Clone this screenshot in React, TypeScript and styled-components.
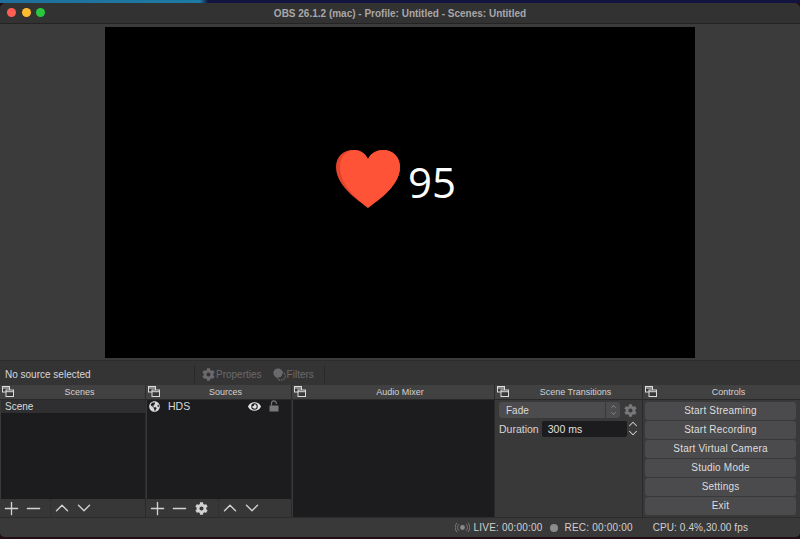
import React from "react";
import styled, { createGlobalStyle } from "styled-components";
import { Plus, Minus, ChevronUp, ChevronDown } from "lucide-react";
import { FaCog, FaEye, FaGlobeAmericas } from "react-icons/fa";

const GlobalStyle = createGlobalStyle`
  html, body {
    margin: 0;
    padding: 0;
    background: #1a0d1c;
  }
  body {
    font-family: "Liberation Sans", Arial, sans-serif;
    font-size: 10px;
    color: #d6d6d6;
  }
`;

const UndockIcon = () => (
  <DockIconSvg viewBox="0 0 12 11" fill="none" stroke="#dcdcdc" strokeWidth="1">
    <rect x="0.5" y="0.5" width="7" height="5.5" fill="#3a393a" />
    <path d="M0.5 2h7" />
    <rect x="4" y="4" width="7.5" height="6.5" fill="#3a393a" />
    <path d="M4 5.7h7.5" />
  </DockIconSvg>
);

const FilterIcon = () => (
  <svg width="13" height="13" viewBox="0 0 13 13" fill="#6a696b">
    <circle cx="5" cy="5" r="4.6" />
    <circle cx="8" cy="8" r="4.2" fill="none" stroke="#6a696b" strokeWidth="1.2" strokeDasharray="1.5 1" />
  </svg>
);

const LockIcon = () => (
  <svg width="10" height="12" viewBox="0 0 10 12" fill="none">
    <path d="M2.5 5.5V3.2a2.4 2.4 0 0 1 4.8 0V4" stroke="#77767a" strokeWidth="1.2" />
    <rect x="0.5" y="5.5" width="9" height="6" fill="#77767a" />
  </svg>
);

const LiveIcon = () => (
  <svg width="15" height="11" viewBox="0 0 15 11" fill="none" stroke="#767576" strokeWidth="1">
    <circle cx="7.5" cy="5.5" r="2.4" fill="#8a898a" stroke="none" />
    <path d="M4 2.2a4.8 4.8 0 0 0 0 6.6M11 2.2a4.8 4.8 0 0 1 0 6.6" />
    <path d="M2 .8a7.2 7.2 0 0 0 0 9.4M13 .8a7.2 7.2 0 0 1 0 9.4" />
  </svg>
);

const HeartGraphic = () => (
  <svg width="64" height="58" viewBox="0 0 64 58">
    <path
      d="M32 58C28 54 0 38 0 17C0 7 7 0 17 0C23 0 29 3 32 9C35 3 41 0 47 0C57 0 64 7 64 17C64 38 36 54 32 58Z"
      fill="#e4432c"
    />
    <path
      d="M32 58C28 54 4 38 4 17C4 7 10 0 19 0C24 0 29 3 32 9C35 3 41 0 47 0C57 0 64 7 64 17C64 38 36 54 32 58Z"
      fill="#ff5338"
    />
  </svg>
);

const SceneToolbar = () => (
  <Toolbar>
    <ToolGroup>
      <ToolButton><Plus size={21} strokeWidth={1.5} /></ToolButton>
      <ToolButton><Minus size={21} strokeWidth={1.5} /></ToolButton>
    </ToolGroup>
    <ToolGroup>
      <ToolButton><ChevronUp size={24} strokeWidth={1.5} /></ToolButton>
      <ToolButton><ChevronDown size={24} strokeWidth={1.5} /></ToolButton>
    </ToolGroup>
  </Toolbar>
);

const SourceToolbar = () => (
  <Toolbar>
    <ToolGroup>
      <ToolButton><Plus size={21} strokeWidth={1.5} /></ToolButton>
      <ToolButton><Minus size={21} strokeWidth={1.5} /></ToolButton>
      <ToolButton><FaCog size={13} /></ToolButton>
    </ToolGroup>
    <ToolGroup>
      <ToolButton><ChevronUp size={24} strokeWidth={1.5} /></ToolButton>
      <ToolButton><ChevronDown size={24} strokeWidth={1.5} /></ToolButton>
    </ToolGroup>
  </Toolbar>
);

const controlLabels = [
  "Start Streaming",
  "Start Recording",
  "Start Virtual Camera",
  "Studio Mode",
  "Settings",
  "Exit",
];

export default function App() {
  return (
    <Desktop>
      <GlobalStyle />
      <Wallpaper />
      <Window>
        <TitleBar>
          <TrafficLights>
            <Light color="#ff5f52" />
            <Light color="#fdbc2e" />
            <Light color="#28c840" />
          </TrafficLights>
          <Title>OBS 26.1.2 (mac) - Profile: Untitled - Scenes: Untitled</Title>
        </TitleBar>
        <PreviewArea>
          <Preview>
            <HeartGraphic />
            <HeartCount>95</HeartCount>
          </Preview>
        </PreviewArea>
        <ContextBar>
          <ContextLabel>No source selected</ContextLabel>
          <ContextActions>
            <ContextAction>
              <FaCog size={13} color="#6a696b" />
              Properties
            </ContextAction>
            <ContextAction>
              <FilterIcon />
              Filters
            </ContextAction>
          </ContextActions>
        </ContextBar>
        <Docks>
          <Dock>
            <DockTitle><UndockIcon />Scenes</DockTitle>
            <DockList>
              <SceneRow>Scene</SceneRow>
            </DockList>
            <SceneToolbar />
          </Dock>
          <Dock>
            <DockTitle><UndockIcon />Sources</DockTitle>
            <DockList>
              <SourceRow>
                <FaGlobeAmericas size={11} color="#d8d8d8" />
                <SourceName>HDS</SourceName>
                <FaEye size={13} color="#e4e4e4" />
                <LockIcon />
              </SourceRow>
            </DockList>
            <SourceToolbar />
          </Dock>
          <Dock>
            <DockTitle><UndockIcon />Audio Mixer</DockTitle>
            <DockList />
          </Dock>
          <Dock>
            <DockTitle><UndockIcon />Scene Transitions</DockTitle>
            <TransitionBody>
              <ComboRow>
                <Combo>
                  Fade
                  <ComboStepper>
                    <ChevronUp size={7} strokeWidth={2} />
                    <ChevronDown size={7} strokeWidth={2} />
                  </ComboStepper>
                </Combo>
                <FaCog size={13} color="#77767a" />
              </ComboRow>
              <DurationRow>
                <span>Duration</span>
                <DurationInput>300 ms</DurationInput>
                <Spinner>
                  <ChevronUp size={14} strokeWidth={1.8} />
                  <ChevronDown size={14} strokeWidth={1.8} />
                </Spinner>
              </DurationRow>
            </TransitionBody>
          </Dock>
          <Dock>
            <DockTitle><UndockIcon />Controls</DockTitle>
            <ControlsBody>
              {controlLabels.map((label) => (
                <ControlButton key={label}>{label}</ControlButton>
              ))}
            </ControlsBody>
          </Dock>
        </Docks>
        <StatusBar>
          <StatusItem>
            <LiveIcon />
            LIVE: 00:00:00
          </StatusItem>
          <StatusItem>
            <RecDot />
            REC: 00:00:00
          </StatusItem>
          <CpuItem>CPU: 0.4%,30.00 fps</CpuItem>
        </StatusBar>
      </Window>
    </Desktop>
  );
}

const Desktop = styled.div`
  display: flex;
  flex-direction: column;
  width: 800px;
  height: 539px;
  overflow: hidden;
  background: #240d14;
`;

const Wallpaper = styled.div`
  flex: none;
  height: 3px;
  background: linear-gradient(90deg, #1f6f9c 0, #1c7aa3 200px, #12143f 208px, #12143f 100%);
`;

const Window = styled.div`
  display: flex;
  flex-direction: column;
  height: 534px;
  background: #3a393a;
  border-radius: 6px 6px 5px 5px;
  overflow: hidden;
`;

const TitleBar = styled.div`
  position: relative;
  flex: none;
  display: flex;
  align-items: center;
  justify-content: center;
  height: 20px;
  background: #333233;
  border-bottom: 1px solid #242324;
`;

const TrafficLights = styled.div`
  position: absolute;
  left: 7px;
  top: 5px;
  display: flex;
  gap: 5.5px;
`;

const Light = styled.span<{ color: string }>`
  width: 9px;
  height: 9px;
  border-radius: 50%;
  background: ${(props) => props.color};
`;

const Title = styled.div`
  font-size: 10px;
  font-weight: 700;
  color: #a8a7a8;
`;

const PreviewArea = styled.div`
  flex: none;
  display: flex;
  justify-content: center;
  height: 337px;
  padding-top: 3px;
  box-sizing: border-box;
  border-bottom: 1px solid #2e2d2e;
  background: #3c3b3c;
`;

const Preview = styled.div`
  display: flex;
  align-items: center;
  justify-content: center;
  gap: 8px;
  width: 590px;
  height: 331px;
  padding-bottom: 27px;
  padding-right: 8px;
  box-sizing: border-box;
  background: #000;
`;

const HeartCount = styled.div`
  font-family: "Open Sans", sans-serif;
  font-size: 42px;
  color: #fff;
  line-height: 1;
  margin-top: 6px;
`;

const ContextBar = styled.div`
  flex: none;
  display: flex;
  align-items: center;
  height: 24px;
  padding: 2px 0 0 5px;
  box-sizing: border-box;
  background: #353435;
`;

const ContextLabel = styled.div`
  width: 189px;
  color: #d8d8d8;
`;

const ContextActions = styled.div`
  display: flex;
  align-items: center;
  gap: 11px;
  height: 18px;
  width: 122px;
  padding: 0 0 0 7px;
  border-left: 1px solid #2a292a;
  border-right: 1px solid #2a292a;
`;

const ContextAction = styled.div`
  display: flex;
  align-items: center;
  gap: 1px;
  color: #6a696b;
`;

const Docks = styled.div`
  flex: none;
  display: grid;
  grid-template-columns: 146px 146px 203px 148px 157px;
  height: 132px;
`;

const Dock = styled.div`
  display: flex;
  flex-direction: column;
  border-right: 1px solid #2b2a2b;
  &:last-child {
    border-right: 0;
  }
`;

const DockTitle = styled.div`
  position: relative;
  flex: none;
  height: 14px;
  line-height: 15px;
  padding-left: 14px;
  text-align: center;
  font-size: 9px;
  color: #d2d2d2;
  background: #424142;
  border-bottom: 1px solid #2a292a;
`;

const DockIconSvg = styled.svg`
  position: absolute;
  left: 2px;
  top: 1px;
  width: 12px;
  height: 11px;
`;

const DockList = styled.div`
  flex: 1;
  margin-left: 1px;
  background: #1c1b1d;
`;

const SceneRow = styled.div`
  height: 13px;
  line-height: 13px;
  padding-left: 4px;
  color: #dadada;
  background: #2f2e30;
`;

const SourceRow = styled.div`
  display: flex;
  align-items: center;
  height: 12px;
  padding: 0 12px 0 2px;
  gap: 8px;
  font-size: 10.5px;
  color: #dadada;
`;

const SourceName = styled.span`
  flex: 1;
`;

const Toolbar = styled.div`
  flex: none;
  display: flex;
  align-items: center;
  height: 18px;
  color: #d2d2d2;
  background: #383738;
`;

const ToolGroup = styled.div`
  display: flex;
  align-items: center;
  padding-right: 6px;
  border-right: 1px dotted #2c2b2c;
  &:last-child {
    border-right: 0;
  }
`;

const ToolButton = styled.div`
  display: flex;
  align-items: center;
  justify-content: center;
  width: 22px;
  height: 18px;
`;

const TransitionBody = styled.div`
  flex: 1;
  display: flex;
  flex-direction: column;
  gap: 2px;
  padding: 2px 5px 0 4px;
`;

const ComboRow = styled.div`
  display: flex;
  align-items: center;
  gap: 4px;
`;

const Combo = styled.div`
  flex: 1;
  display: flex;
  align-items: center;
  justify-content: space-between;
  height: 16px;
  padding: 0 0 0 7px;
  border-radius: 3px;
  background: #4c4b4d;
  color: #dcdcdc;
`;

const ComboStepper = styled.div`
  display: flex;
  flex-direction: column;
  align-items: center;
  justify-content: center;
  width: 14px;
  height: 16px;
  border-left: 1px solid #3a393a;
  color: #b8b8b8;
`;

const DurationRow = styled.div`
  display: flex;
  align-items: center;
  height: 17px;
  font-size: 10.5px;
  color: #d6d6d6;
`;

const DurationInput = styled.div`
  flex: 1;
  height: 16px;
  line-height: 16px;
  margin-left: 3px;
  padding-left: 6px;
  background: #1c1b1d;
  border-radius: 2px;
  color: #e0e0e0;
`;

const Spinner = styled.div`
  display: flex;
  flex-direction: column;
  width: 11px;
  margin-right: -1px;
  color: #d0d0d0;
  svg {
    margin: -2.5px 0 -2.5px -1px;
  }
`;

const ControlsBody = styled.div`
  display: flex;
  flex-direction: column;
  gap: 1.5px;
  padding: 2px 4px 0 2px;
`;

const ControlButton = styled.div`
  height: 17.5px;
  line-height: 17.5px;
  text-align: center;
  border-radius: 3px;
  background: #4b4a4c;
  letter-spacing: 0.2px;
  color: #dedede;
`;

const StatusBar = styled.div`
  flex: 1;
  display: flex;
  align-items: center;
  justify-content: flex-end;
  gap: 7px;
  padding-right: 52px;
  background: #3a393a;
  border-top: 1px solid #2d2c2d;
`;

const StatusItem = styled.div`
  display: flex;
  align-items: center;
  gap: 4px;
  letter-spacing: 0.2px;
  color: #d0d0d0;
`;

const CpuItem = styled(StatusItem)`
  margin-left: 13px;
  letter-spacing: 0.1px;
`;

const RecDot = styled.span`
  width: 8px;
  height: 8px;
  margin-right: 3px;
  border-radius: 50%;
  background: #8d8c8d;
`;
